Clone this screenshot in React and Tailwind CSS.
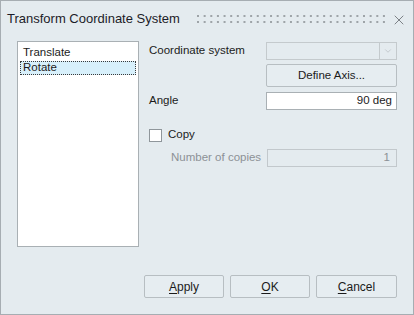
import React from "react";
import { X, ChevronDown } from "lucide-react";

// ── Title bar grip (two rows of little dots) ──────────────────────────────────
const Grip = () => {
  const cols = Array.from({ length: 29 }, (_, i) => i);
  return (
    <svg width="188" height="9" className="shrink-0">
      {cols.map((i) => (
        <g key={i} fill="#9ea4a8">
          <rect x={i * 6.64} y={0} width={2} height={2} />
          <rect x={i * 6.64} y={6} width={2} height={2} />
        </g>
      ))}
    </svg>
  );
};

const Btn = ({ children, className = "" }) => (
  <button
    className={`h-[23px] border border-[#b7bec2] rounded-[2px] bg-[#e6edf1] text-[#1b1b1b] flex items-center justify-center ${className}`}
  >
    {children}
  </button>
);

export default function App() {
  return (
    <div
      className="w-[414px] h-[315px] border border-[#a6adb2] bg-[#e4ebef] flex flex-col text-[11.5px] text-[#1b1b1b]"
      style={{ fontFamily: '"Liberation Sans", Arial, sans-serif' }}
    >
      {/* Title bar */}
      <div className="h-[36px] flex items-center pl-[6px] pr-[6px] shrink-0">
        <span className="text-[13px] text-[#1c1c28] w-[188px]">
          Transform Coordinate System
        </span>
        <div className="ml-[2px] mt-[1px]">
          <Grip />
        </div>
        <div className="flex-1" />
        <X size={16} strokeWidth={1.3} className="text-[#6c7175] mt-[1px]" />
      </div>

      {/* Body */}
      <div className="flex pl-[16px] pt-[4px]">
        {/* List */}
        <div className="w-[122px] h-[206px] bg-white border border-[#a9b0b4] pt-[2px] px-[2px]">
          <div className="h-[17px] pl-[3px] flex items-center">Translate</div>
          <div className="h-[14px] pl-[2px] flex items-center bg-[#d8f0fb] border border-dotted border-[#3a3a3a]">
            Rotate
          </div>
        </div>

        {/* Right column */}
        <div className="ml-[9px] w-[249px] flex flex-col pt-[1px]">
          <div className="flex items-center h-[18px]">
            <span className="w-[118px] pl-[1px]">Coordinate system</span>
            <div className="w-[131px] h-[18px] border border-[#c4cacd] flex">
              <div className="flex-1" />
              <div className="w-[17px] border-l border-[#c4cacd] flex items-center justify-center">
                <ChevronDown size={10} strokeWidth={1.5} className="text-[#b0b6ba]" />
              </div>
            </div>
          </div>

          <div className="flex mt-[4px]">
            <div className="w-[118px]" />
            <Btn className="w-[131px]">Define Axis...</Btn>
          </div>

          <div className="flex items-center h-[18px] mt-[5px]">
            <span className="w-[118px] pl-[1px]">Angle</span>
            <div className="w-[131px] h-[18px] border border-[#a9b0b4] bg-white flex items-center justify-end pr-[4px]">
              90 deg
            </div>
          </div>

          <div className="flex items-center mt-[18px] h-[14px]">
            <div className="w-[13px] h-[13px] border border-[#8f969b] bg-white ml-[1px]" />
            <span className="ml-[6px]">Copy</span>
          </div>

          <div className="flex items-center h-[18px] mt-[7px]">
            <span className="w-[119px] pl-[23px] text-[#8c9196]">Number of copies</span>
            <div className="w-[130px] h-[18px] border border-[#c2c8cc] flex items-center justify-end pr-[6px] text-[#8c9196]">
              1
            </div>
          </div>
        </div>
      </div>

      <div className="flex-1" />

      {/* Footer buttons */}
      <div className="flex justify-end gap-[6px] pr-[16px] pb-[16px]">
        <Btn className="w-[80px] h-[22px] text-[12px]">
          <u className="underline-offset-2">A</u>pply
        </Btn>
        <Btn className="w-[80px] h-[22px] text-[12px]">
          <u className="underline-offset-2">O</u>K
        </Btn>
        <Btn className="w-[81px] h-[22px] text-[12px]">
          <u className="underline-offset-2">C</u>ancel
        </Btn>
      </div>
    </div>
  );
}
